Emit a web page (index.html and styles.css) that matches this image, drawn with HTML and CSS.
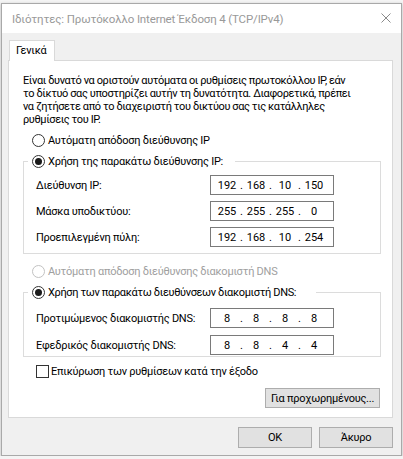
FILE: index.html
```html
<!DOCTYPE html>
<html lang="el">
<head>
  <meta charset="UTF-8" />
  <title>Ιδιότητες: Πρωτόκολλο Internet Έκδοση 4 (TCP/IPv4)</title>
  <link rel="stylesheet" href="styles.css">
</head>
<body>
  <div class="window">
    <div class="titlebar">
      <span class="title">Ιδιότητες: Πρωτόκολλο Internet Έκδοση 4 (TCP/IPv4)</span>
      <svg class="close" width="10" height="10" viewBox="0 0 10 10">
        <path d="M0.5 0.5 L9.5 9.5 M9.5 0.5 L0.5 9.5" stroke="#8a8a8a" stroke-width="1" fill="none"/>
      </svg>
    </div>

    <div class="dialog">
      <div class="tabs">
        <div class="tab">Γενικά</div>
      </div>

      <div class="pane">
        <p class="intro">
          Είναι δυνατό να οριστούν αυτόματα οι ρυθμίσεις πρωτοκόλλου IP, εάν<br>
          το δίκτυό σας υποστηρίζει αυτήν τη δυνατότητα. Διαφορετικά, πρέπει<br>
          να ζητήσετε από το διαχειριστή του δικτύου σας τις κατάλληλες<br>
          ρυθμίσεις του IP.
        </p>

        <div class="radio auto"><span class="dot"></span>Αυτόματη απόδοση διεύθυνσης IP</div>

        <fieldset class="group">
          <legend><div class="radio checked"><span class="dot"></span>Χρήση της παρακάτω διεύθυνσης IP:</div></legend>
          <div class="row">
            <span class="label">Διεύθυνση IP:</span>
            <div class="ip"><span>192</span><i>.</i><span>168</span><i>.</i><span>10</span><i>.</i><span>150</span></div>
          </div>
          <div class="row">
            <span class="label">Μάσκα υποδικτύου:</span>
            <div class="ip"><span>255</span><i>.</i><span>255</span><i>.</i><span>255</span><i>.</i><span>0</span></div>
          </div>
          <div class="row">
            <span class="label">Προεπιλεγμένη πύλη:</span>
            <div class="ip"><span>192</span><i>.</i><span>168</span><i>.</i><span>10</span><i>.</i><span>254</span></div>
          </div>
        </fieldset>

        <div class="radio auto disabled"><span class="dot"></span>Αυτόματη απόδοση διεύθυνσης διακομιστή DNS</div>

        <fieldset class="group dns">
          <legend><div class="radio checked"><span class="dot"></span>Χρήση των παρακάτω διευθύνσεων διακομιστή DNS:</div></legend>
          <div class="row">
            <span class="label">Προτιμώμενος διακομιστής DNS:</span>
            <div class="ip"><span>8</span><i>.</i><span>8</span><i>.</i><span>8</span><i>.</i><span>8</span></div>
          </div>
          <div class="row">
            <span class="label">Εφεδρικός διακομιστής DNS:</span>
            <div class="ip"><span>8</span><i>.</i><span>8</span><i>.</i><span>4</span><i>.</i><span>4</span></div>
          </div>
        </fieldset>

        <div class="check"><span class="box"></span>Επικύρωση των ρυθμίσεων κατά την έξοδο</div>

        <div class="advanced">
          <button class="btn adv">Για προχωρημένους...</button>
        </div>
      </div>

      <div class="actions">
        <button class="btn">OK</button>
        <button class="btn">Άκυρο</button>
      </div>
    </div>
  </div>
</body>
</html>
```

FILE: styles.css
```css
* {
  margin: 0;
  padding: 0;
  box-sizing: border-box;
}

body {
  background: #f4f4f4;
  font-family: Roboto, "Liberation Sans", sans-serif;
  font-size: 11px;
  letter-spacing: -0.25px;
  color: #000;
}

.window {
  margin: 3px 0 0 1px;
  width: 401px;
  height: 453px;
  border: 1px solid #a9a9a9;
  background: #f0f0f0;
  box-shadow: 0 1px 3px rgba(0, 0, 0, 0.25);
  overflow: hidden;
}

.titlebar {
  height: 29px;
  background: #fff;
  display: flex;
  align-items: center;
  justify-content: space-between;
  padding: 0 10px 0 10px;
}

.title {
  color: #999;
  font-size: 11.5px;
  letter-spacing: -0.15px;
}

.close {
  margin-top: -2px;
}

.dialog {
  padding: 7px 8px 0 6px;
}

.tabs {
  display: flex;
  padding-left: 1px;
}

.tab {
  position: relative;
  height: 21px;
  margin-bottom: -1px;
  padding: 3px 0 0 6px;
  width: 46px;
  background: #fff;
  border: 1px solid #d9d9d9;
  border-bottom: none;
  line-height: 14px;
}

.pane {
  height: 358px;
  background: #fff;
  border: 1px solid #d9d9d9;
  padding: 13px 11px 0 14px;
}

.intro {
  line-height: 13px;
  white-space: nowrap;
  letter-spacing: -0.4px;
}

.radio {
  display: flex;
  align-items: center;
  height: 13px;
  line-height: 13px;
  white-space: nowrap;
}

.radio .dot {
  width: 13px;
  height: 13px;
  border: 1px solid #333;
  border-radius: 50%;
  background: #fff;
  margin-right: 3px;
  display: flex;
  align-items: center;
  justify-content: center;
}

.radio.checked .dot::after {
  content: "";
  width: 7px;
  height: 7px;
  border-radius: 50%;
  background: #1a1a1a;
}

.radio.auto {
  margin: 8px 0 0 9px;
}

.radio.disabled {
  margin-top: 11px;
  color: #a0a0a0;
}

.radio.disabled .dot {
  border-color: #c2c2c2;
}

.group {
  margin-top: 8px;
  border: 1px solid #dcdcdc;
  padding: 7px 0 6px;
  min-width: 0;
}

.group legend {
  margin-left: 4px;
  padding: 0 12px 0 4px;
}

.group.dns {
  padding: 9px 0 1px;
}

.group.dns legend {
  padding-right: 20px;
  letter-spacing: -0.35px;
}

.row {
  display: flex;
  align-items: center;
  height: 20px;
  padding-left: 12px;
  margin-bottom: 6px;
}

.group .row:last-child {
  margin-bottom: 0;
}

.dns .row {
  margin-bottom: 7px;
}

.label {
  width: 174px;
}

.ip {
  display: flex;
  align-items: center;
  width: 124px;
  height: 20px;
  border: 1px solid #7a7a7a;
  padding-left: 5px;
  background: #fff;
  letter-spacing: 0;
}

.ip span {
  width: 22px;
  text-align: center;
}

.ip i {
  width: 7px;
  text-align: center;
  font-style: normal;
}

.check {
  display: flex;
  align-items: center;
  height: 13px;
  margin: 8px 0 0 13px;
}

.check .box {
  width: 13px;
  height: 13px;
  border: 1px solid #333;
  background: #fff;
  margin-right: 2px;
}

.advanced {
  display: flex;
  justify-content: flex-end;
  margin-top: 10px;
  padding-right: 1px;
}

.btn {
  font-family: inherit;
  font-size: 11px;
  letter-spacing: inherit;
  color: #000;
  background: #e1e1e1;
  border: 1px solid #adadad;
  height: 21px;
  width: 74px;
}

.btn.adv {
  width: 115px;
  height: 20px;
}

.actions {
  display: flex;
  justify-content: flex-end;
  gap: 7px;
  margin-top: 9px;
}
```
